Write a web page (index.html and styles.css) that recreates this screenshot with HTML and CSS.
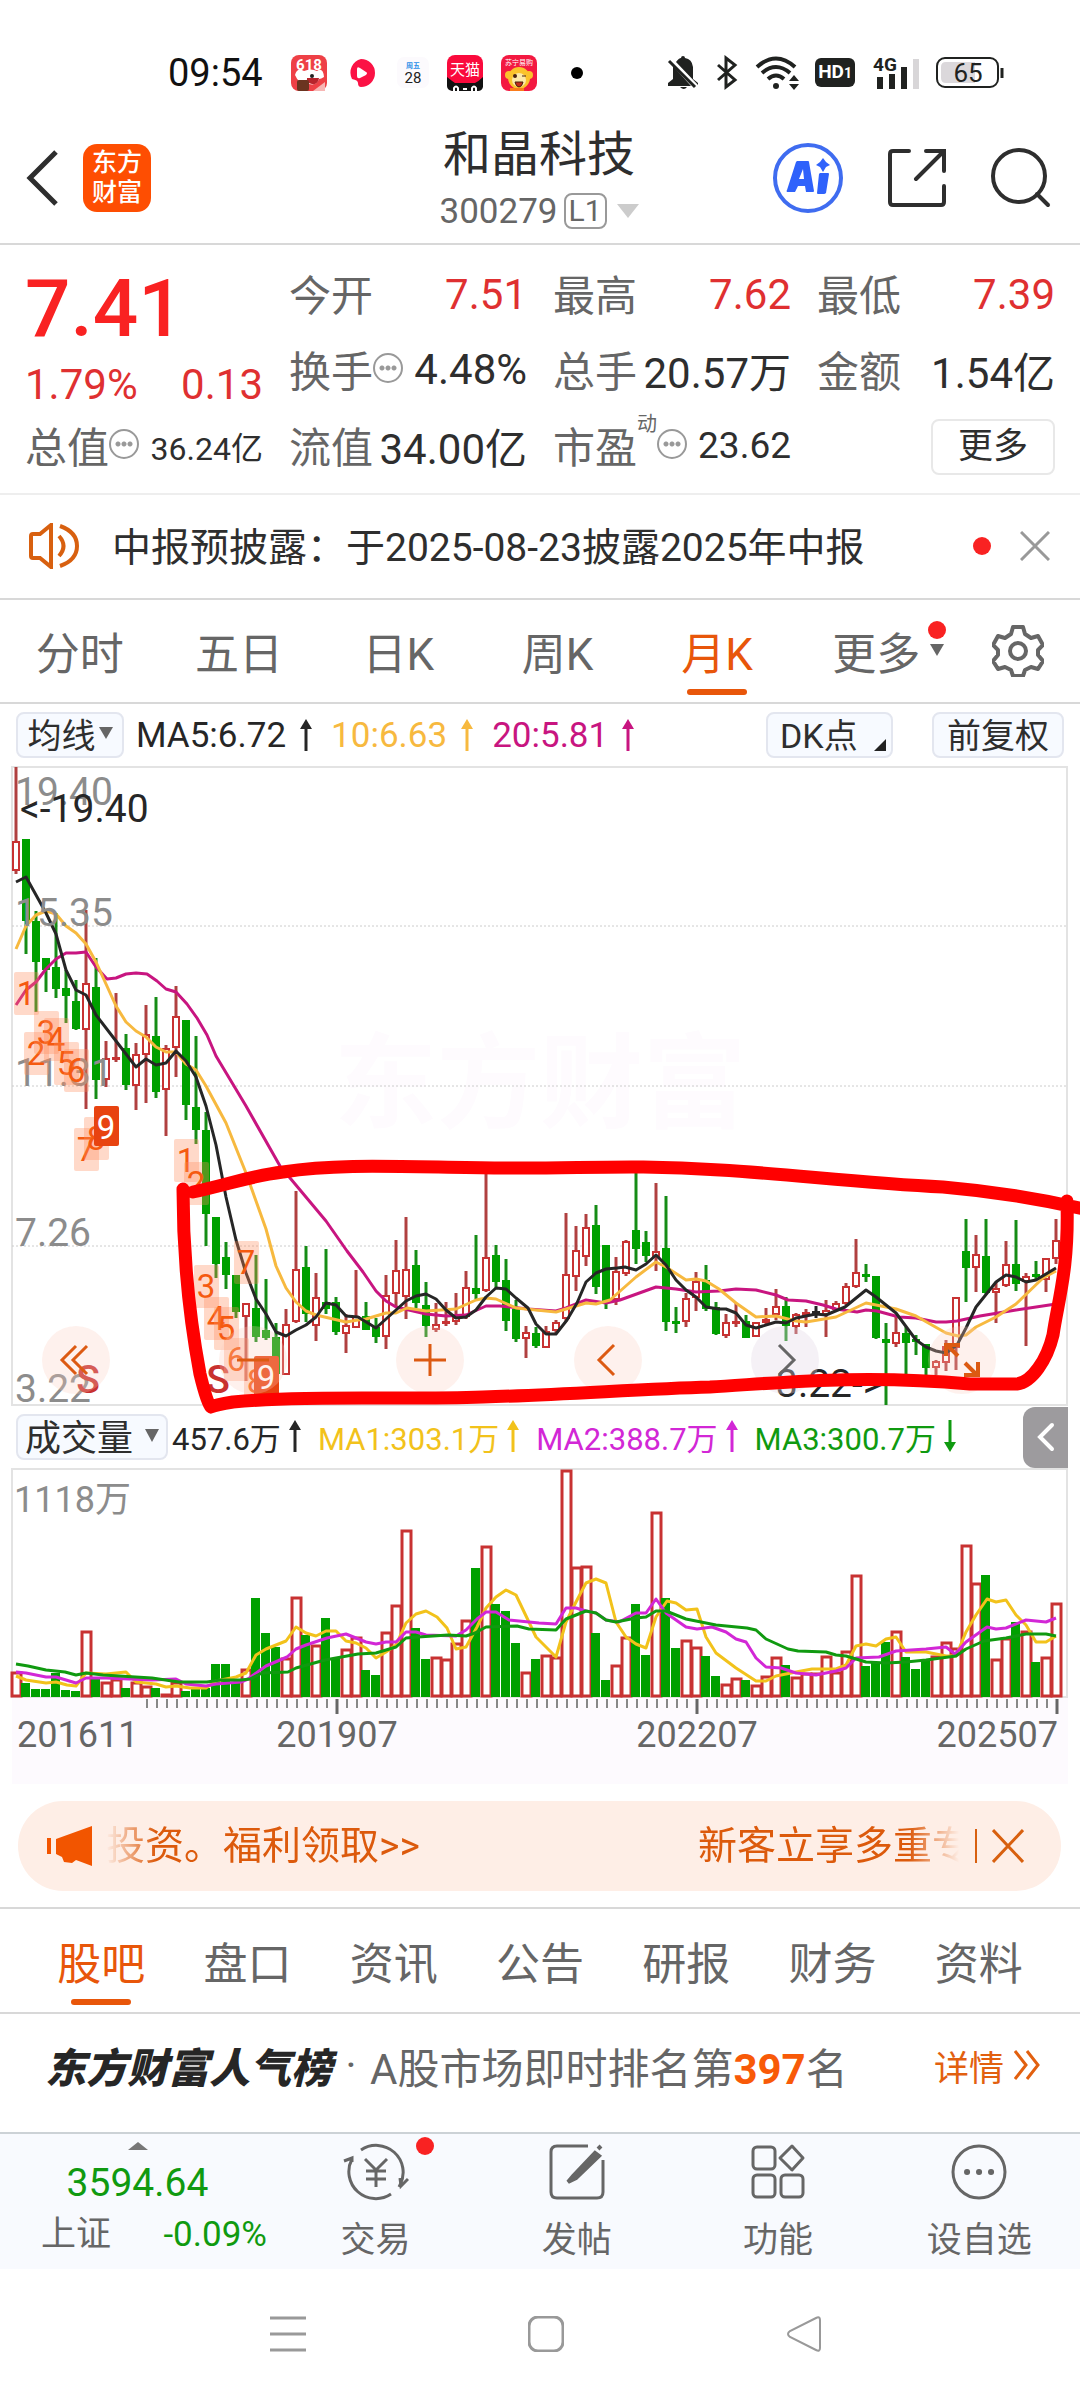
FILE: index.html
```html
<!DOCTYPE html>
<html lang="zh-CN">
<head>
<meta charset="utf-8">
<meta name="viewport" content="width=device-width, initial-scale=1">
<title>和晶科技 300279</title>
<link rel="stylesheet" href="styles.css">
</head>
<body>
<div class="status">
  <span class="clock">09:54</span>
  <div class="apps">
    <svg width="36" height="36" viewBox="0 0 36 36"><rect width="36" height="36" rx="8" fill="#ee4046"/><text x="18" y="15" class="app-618">618</text><path d="M4 20Q6 12 13 16Q20 13 26 16Q32 12 33 22Q30 24 28 24Q26 31 18 29Q8 30 4 20Z" fill="#fff"/><path d="M16 23h12q-1 7-7 6t-5-6Z" fill="#b8242c"/><circle cx="21" cy="21" r="2" fill="#222"/><rect x="6" y="25" width="12" height="11" rx="2" fill="#6b3420"/><path d="M22 36l12-9v9Z" fill="#f7b6b4"/></svg>
    <svg class="app-video" width="28" height="28" viewBox="0 0 28 28"><path d="M14 0a14 14 0 1 1 0 28q-3 0-3-4q0-3-6-4A14 14 0 0 1 14 0Z" fill="#fb1245"/><path d="M10 10q0-3 3-1l6 4q2 1 0 3l-6 3q-3 1-3-2Z" fill="#fff"/></svg>
    <svg width="32" height="36" viewBox="0 0 32 36"><rect y="2" width="32" height="31" rx="7" fill="#fcfafd"/><text x="16" y="13" class="app-week">周五</text><text x="16" y="28" class="app-day">28</text></svg>
    <svg width="36" height="36" viewBox="0 0 36 36"><rect width="36" height="36" rx="8" fill="#fa0a3c"/><path d="M0 22q5 4 8 6h20q4-2 8-6v10q-1 4-5 4H5q-5-1-5-5Z" fill="#111"/><path d="M7 36v-3q2-3 4 0v3M25 36v-3q2-3 4 0v3M16 34h4" stroke="#fff" stroke-width="2" fill="none"/><text x="18" y="20" class="app-tmall">天猫</text></svg>
    <svg width="36" height="36" viewBox="0 0 36 36"><rect width="36" height="36" rx="8" fill="#f31941"/><text x="18" y="10" class="app-shop">苏宁易购</text><circle cx="18" cy="23" r="11" fill="#fbc32c"/><circle cx="8" cy="20" r="4" fill="#fbc32c"/><circle cx="28" cy="20" r="4" fill="#fbc32c"/><circle cx="18" cy="25" r="7" fill="#fde9a8"/><circle cx="14" cy="21" r="2" fill="#47210f"/><path d="M21 21h4M14 27h8q-1 5-4 5t-4-5Z" stroke="#47210f" fill="#c4291c"/><path d="M9 36v-3h14v3Z" fill="#fa7c1c"/></svg>
    <span class="more-dot"></span>
  </div>
  <div class="system">
    <svg width="32" height="36" viewBox="0 0 32 36" fill="#202220"><path d="M9 7Q12 3 14 3q0-2 2-2t2 2q7 1 8 9v12l5 4v2L9 7ZM6 11v13l-5 4v3h23L6 11Z"/><path d="M13 32h7q-3 4-7 0Z"/><path d="M2 6l26 26" stroke="#202220" stroke-width="3"/></svg>
    <svg class="bt" width="22" height="36" viewBox="0 0 22 36" fill="none" stroke="#202220" stroke-width="3"><path d="M2 10l17 15-9 7V3l9 7L2 25"/></svg>
    <svg class="wifi" width="46" height="36" viewBox="0 0 46 36" fill="none" stroke="#202220" stroke-width="4"><path d="M2 12q19-17 38 0M7 18q14-12 28 0M13 24q8-7 16 0"/><circle cx="21" cy="31" r="3" fill="#202220" stroke="none"/><path d="M34 26l5-6 5 6ZM34 29l5 6 5-6Z" fill="#202220" stroke="none"/></svg>
    <span class="hd">HD<small>1</small></span>
    <svg class="signal" width="48" height="36" viewBox="0 0 48 36"><text x="0" y="16" class="net">4G</text><path d="M7 22v12M19 19v15M31 12v22" stroke="#202220" stroke-width="6"/><path d="M43 4v30" stroke="#d8d6d8" stroke-width="6"/></svg>
    <svg width="68" height="32" viewBox="0 0 68 32"><rect x="1" y="1" width="61" height="29" rx="8" fill="none" stroke="#202220" stroke-width="2"/><path d="M10 5h29v21H10q-5 0-5-5V10q0-5 5-5Z" fill="#dbd8db"/><path d="M66 11v10" stroke="#202220" stroke-width="3"/><text x="32" y="25" class="charge">65</text></svg>
  </div>
</div>

<header class="top">
  <div class="top-left">
    <button class="bare" aria-label="返回"><svg width="34" height="58" viewBox="0 0 34 58"><path d="M30 3L4 29l26 26" fill="none" stroke="#2e2e2e" stroke-width="5"/></svg></button>
    <a class="logo" href="#home"><span>东方</span><span>财富</span></a>
  </div>
  <div class="stock">
    <h1>和晶科技</h1>
    <button class="code">300279<span class="level">L1</span><svg width="22" height="14" viewBox="0 0 22 14"><path d="M0 0h22L11 14Z" fill="#ccc"/></svg></button>
  </div>
  <div class="top-right">
    <button class="bare" aria-label="Ai"><svg width="72" height="72" viewBox="0 0 72 72"><circle cx="36" cy="36" r="33" fill="none" stroke="#3f6cf0" stroke-width="4"/><path fill="#2f62fb" fill-rule="evenodd" d="M25 19h11q1 0 1 1l5 29q0 1-1 1h-7l-1-6h-7l-3 6h-8q-1-1 0-2l9-28ZM31 27l-4 10h5ZM48 31h8q1 0 1 1l-3 19q-1 1-2 1h-6q-1 0-1-1l2-19ZM51 16l3 4 4 3-4 2-3 5-3-5-4-2 4-3Z"/></svg></button>
    <button class="bare" aria-label="分享"><svg width="58" height="58" viewBox="0 0 58 58" fill="none" stroke="#2e2e2e" stroke-width="4" stroke-linecap="round"><path d="M21 2H5q-3 0-3 3v48q0 3 3 3h48q3 0 3-3V37M38 2h18v20M56 2L28 30"/></svg></button>
    <button class="bare" aria-label="搜索"><svg width="62" height="62" viewBox="0 0 62 62" fill="none" stroke="#2e2e2e" stroke-width="4" stroke-linecap="round"><circle cx="29" cy="29" r="26"/><path d="M47 47l11 11"/></svg></button>
  </div>
</header>

<section class="quote">
  <div class="price-block">
    <strong class="price">7.41</strong>
    <div class="change"><span>1.79%</span><span>0.13</span></div>
  </div>
  <div class="cell"><span>今开</span><b class="up">7.51</b></div>
  <div class="cell"><span>最高</span><b class="up">7.62</b></div>
  <div class="cell"><span>最低</span><b class="up">7.39</b></div>
  <div class="cell"><span>换手<i class="tip"></i></span><b>4.48%</b></div>
  <div class="cell"><span>总手</span><b>20.57万</b></div>
  <div class="cell"><span>金额</span><b>1.54亿</b></div>
  <div class="cell"><span>总值<i class="tip"></i></span><b class="small">36.24亿</b></div>
  <div class="cell"><span>流值</span><b>34.00亿</b></div>
  <div class="cell"><span>市盈<sup>动</sup><i class="tip"></i></span><b class="mid">23.62</b></div>
  <div class="cell end"><button class="more">更多</button></div>
</section>

<section class="notice">
  <svg width="50" height="46" viewBox="0 0 50 46" fill="none" stroke="#d8600f" stroke-width="4"><path d="M2 13q0-2 2-2h7L22 2v42L11 35H4q-2 0-2-2ZM30 13q9 10 0 20M31 3q17 6 17 20T31 43"/></svg>
  <a href="#notice">中报预披露：于2025-08-23披露2025年中报</a>
  <span class="dot"></span>
  <button class="bare" aria-label="关闭"><svg width="30" height="30" viewBox="0 0 30 30"><path d="M1 1l28 28M29 1L1 29" stroke="#999" stroke-width="3"/></svg></button>
</section>

<nav class="periods">
  <button>分时</button><button>五日</button><button>日K</button><button>周K</button><button class="on">月K</button>
  <button><span class="with-badge">更多<i class="dot badge"></i><i class="caret"></i></span></button>
  <button class="gear" aria-label="设置"><svg width="52" height="52" viewBox="0 0 52 52" fill="none" stroke="#666" stroke-width="4" stroke-linejoin="round"><path d="M21 2h10l2 7 6 4 7-2 5 9-5 5v5l5 6-5 8-7-2-6 3-2 6H21l-2-6-6-3-7 2-5-8 5-6v-5l-5-5 5-9 7 2 6-4Z"/><circle cx="26" cy="26" r="8"/></svg></button>
</nav>

<div class="indicators">
  <button class="chip">均线<i class="caret"></i></button>
  <span class="ma dark">MA5:6.72<svg class="arr" viewBox="0 0 14 32"><path d="M7 32V6"/><path class="tip-fill" d="M1 10L7 0l6 10Z"/></svg></span>
  <span class="ma gold">10:6.63<svg class="arr" viewBox="0 0 14 32"><path d="M7 32V6"/><path class="tip-fill" d="M1 10L7 0l6 10Z"/></svg></span>
  <span class="ma pink">20:5.81<svg class="arr" viewBox="0 0 14 32"><path d="M7 32V6"/><path class="tip-fill" d="M1 10L7 0l6 10Z"/></svg></span>
  <button class="chip dk">DK点<i class="corner"></i></button>
  <button class="chip adj">前复权</button>
</div>

<section class="price-chart">
  <svg class="plot" viewBox="0 766 1080 640">
    <text x="334" y="1120" class="watermark">东方财富</text>
    <path class="frame" d="M12 767H1067V1405H12Z"/>
    <path class="grid" d="M12 926H1067M12 1086H1067M12 1246H1067"/>
    <g id="candles"></g>
    <polyline class="line pink" points="16,1005 26,990 36,982 46,969 56,959 66,953 76,953 86,952 96,967 107,979 116,978 126,974 136,973 147,974 157,981 166,989 176,992 187,1004 197,1018 207,1035 216,1056 246,1106 280,1166 326,1221 347,1251 363,1272 376,1291 386,1301 396,1307 426,1314 446,1316 466,1315 486,1306 500,1306 528,1309 556,1311 566,1308 586,1300 606,1303 620,1300 656,1287 676,1289 696,1292 719,1291 736,1289 756,1290 776,1295 788,1300 806,1301 823,1305 836,1309 857,1312 866,1310 877,1311 899,1317 916,1318 936,1322 946,1322 957,1321 980,1316 1016,1310 1056,1304"/>
    <polyline class="line gold" points="16,949 26,926 36,915 46,911 56,914 66,926 76,933 86,944 96,962 106,984 116,1006 126,1022 136,1031 146,1037 156,1047 166,1052 176,1052 186,1064 196,1070 206,1086 226,1123 246,1173 256,1201 266,1229 276,1266 286,1288 296,1302 306,1311 316,1315 346,1322 358,1320 366,1319 386,1313 396,1313 407,1308 426,1311 456,1309 476,1300 486,1298 496,1299 516,1308 556,1312 566,1309 586,1303 596,1304 610,1300 636,1277 656,1262 666,1267 686,1280 696,1279 706,1281 719,1289 736,1303 756,1317 776,1316 796,1321 806,1322 836,1317 866,1303 896,1309 916,1316 946,1333 958,1336 966,1335 976,1327 996,1317 1016,1304 1043,1278 1056,1271"/>
    <polyline class="line dark" points="16,882 26,877 36,895 46,913 56,934 66,970 76,990 86,995 96,1015 116,1041 126,1054 136,1067 146,1059 156,1065 166,1063 176,1051 186,1061 196,1077 206,1106 216,1145 226,1197 236,1240 246,1273 256,1299 266,1314 276,1332 286,1336 296,1330 306,1325 316,1317 326,1303 336,1305 346,1316 358,1317 376,1328 396,1310 406,1301 416,1296 426,1294 436,1299 446,1310 456,1318 466,1317 476,1310 486,1297 496,1288 506,1289 516,1298 528,1308 536,1324 546,1334 556,1334 567,1320 577,1303 586,1282 596,1273 606,1269 617,1268 625,1267 636,1270 646,1264 656,1255 666,1265 676,1280 686,1290 696,1297 706,1307 719,1309 726,1309 736,1313 746,1325 756,1328 776,1322 786,1323 796,1318 816,1314 826,1315 845,1307 866,1290 876,1297 896,1313 916,1340 926,1347 936,1351 946,1353 957,1345 966,1328 976,1307 996,1282 1006,1275 1016,1277 1026,1282 1036,1280 1056,1268"/>
    <g class="axis">
      <text x="15" y="805">19.40</text><text x="15" y="926">15.35</text><text x="15" y="1086">11.31</text><text x="15" y="1246">7.26</text><text x="15" y="1402">3.22</text>
    </g>
    <text x="20" y="822" class="extreme">&lt;-19.40</text>
    <text x="776" y="1397" class="extreme">3.22-&gt;</text>
    <g class="sell"><text x="88" y="1393">S</text><text x="218" y="1393">S</text></g>
    <g id="marks"></g>
  </svg>
  <div class="tools">
    <button aria-label="最左"><svg viewBox="0 0 36 36"><path d="M18 4L4 18l14 14M29 4L15 18l14 14"/></svg></button>
    <button aria-label="缩小"><svg viewBox="0 0 36 36"><path d="M2 18h32"/></svg></button>
    <button aria-label="放大"><svg viewBox="0 0 36 36"><path d="M2 18h32M18 2v32"/></svg></button>
    <button aria-label="前移"><svg viewBox="0 0 36 36"><path d="M24 3L9 18l15 15"/></svg></button>
    <button class="off" aria-label="后移"><svg viewBox="0 0 36 36"><path d="M12 3l15 15-15 15"/></svg></button>
    <button aria-label="全屏"><svg viewBox="0 0 36 36"><path class="bold" d="M2 14V3h14M3 3l11 11M34 20v13H20M21 21l12 12"/></svg></button>
  </div>
  <svg class="ink" viewBox="0 766 1080 640"><path d="M193 1192C230 1184 250 1176 283 1172C340 1163 400 1167 500 1168C580 1169 630 1164 720 1170C790 1174 860 1183 943 1187C990 1191 1040 1199 1084 1209M183 1189C183 1250 188 1310 200 1374Q207 1403 211 1407Q215 1405 233 1402C310 1395 400 1400 483 1397C560 1395 640 1389 710 1387C780 1383 860 1374 970 1384H1017C1032 1382 1047 1360 1053 1335C1058 1300 1069 1270 1067 1201"/></svg>
</section>

<div class="indicators vol-bar">
  <button class="chip volume">成交量<i class="caret"></i></button>
  <span class="ma dark">457.6万<svg class="arr" viewBox="0 0 14 32"><path d="M7 32V6"/><path class="tip-fill" d="M1 10L7 0l6 10Z"/></svg></span>
  <span class="ma gold2">MA1:303.1万<svg class="arr" viewBox="0 0 14 32"><path d="M7 32V6"/><path class="tip-fill" d="M1 10L7 0l6 10Z"/></svg></span>
  <span class="ma violet">MA2:388.7万<svg class="arr" viewBox="0 0 14 32"><path d="M7 32V6"/><path class="tip-fill" d="M1 10L7 0l6 10Z"/></svg></span>
  <span class="ma green">MA3:300.7万<svg class="arr" viewBox="0 0 14 32"><path d="M7 0V26"/><path class="tip-fill" d="M1 22l6 10 6-10Z"/></svg></span>
  <button class="fold" aria-label="展开"><svg width="20" height="32" viewBox="0 0 20 32"><path d="M16 4L4 16l12 12" fill="none" stroke="#fff" stroke-width="4" stroke-linecap="round"/></svg></button>
</div>

<section class="volume-chart">
  <svg class="plot" viewBox="0 1468 1080 316">
    <rect x="12" y="1697" width="1056" height="87" fill="#fdfafe"/>
    <path class="frame" d="M12 1469H1067V1697H12Z"/>
    <g id="bars"></g>
    <polyline class="line gold2" points="16,1676 26,1680 46,1683 56,1682 67,1685 76,1686 86,1673 106,1674 126,1672 136,1682 156,1684 166,1687 176,1686 190,1688 206,1688 216,1681 236,1677 246,1673 256,1655 266,1649 286,1641 296,1627 306,1633 316,1636 326,1631 336,1631 346,1641 356,1643 366,1648 376,1658 386,1652 396,1645 406,1623 416,1614 426,1611 437,1617 447,1628 456,1649 466,1647 477,1627 486,1608 496,1597 506,1590 516,1595 527,1618 536,1637 556,1657 566,1622 576,1602 586,1583 596,1579 606,1583 616,1622 626,1637 636,1644 646,1648 656,1617 667,1601 676,1603 686,1610 697,1609 706,1637 716,1653 736,1668 756,1681 766,1681 776,1676 796,1672 812,1669 836,1669 846,1665 856,1646 866,1644 876,1646 886,1639 896,1637 906,1652 926,1652 946,1656 956,1656 966,1632 976,1615 987,1599 996,1602 1006,1600 1016,1615 1026,1625 1036,1642 1046,1642 1056,1636"/>
    <polyline class="line violet" points="16,1672 26,1673 46,1677 56,1677 76,1683 86,1678 106,1678 152,1680 176,1679 186,1684 206,1686 216,1684 241,1682 248,1679 266,1666 287,1657 296,1649 306,1645 327,1638 346,1634 366,1642 376,1644 386,1642 396,1642 406,1632 416,1632 426,1635 456,1636 466,1630 477,1619 486,1612 496,1612 509,1620 539,1623 556,1624 566,1608 576,1608 586,1611 596,1613 606,1620 619,1622 636,1613 646,1613 656,1599 666,1613 686,1627 697,1629 712,1627 726,1632 736,1639 746,1642 756,1658 766,1667 781,1668 796,1673 816,1675 836,1671 846,1668 856,1658 879,1657 896,1651 926,1649 946,1647 955,1654 966,1642 987,1627 996,1629 1006,1628 1026,1620 1046,1622 1056,1618"/>
    <polyline class="line green" points="16,1664 28,1666 46,1670 65,1672 76,1675 86,1673 103,1675 152,1678 179,1682 207,1682 220,1680 241,1680 250,1679 262,1673 288,1672 296,1668 325,1660 358,1654 376,1653 396,1647 406,1638 418,1637 448,1635 466,1636 475,1633 486,1627 517,1626 529,1629 556,1630 566,1619 586,1611 596,1613 606,1620 616,1622 636,1618 646,1617 656,1611 666,1611 686,1619 716,1625 747,1628 756,1630 766,1639 788,1649 798,1651 826,1652 836,1655 846,1656 866,1662 886,1663 906,1662 926,1660 956,1656 966,1649 984,1641 1006,1638 1026,1634 1046,1634 1056,1636"/>
    <g id="ticks"></g>
    <text x="14" y="1512" class="vol-max">1118万</text>
    <g class="dates"><text x="17" y="1747">201611</text><text x="337" y="1747" class="c">201907</text><text x="697" y="1747" class="c">202207</text><text x="1058" y="1747" class="e">202507</text></g>
  </svg>
</section>

<aside class="promo">
  <svg width="46" height="40" viewBox="0 0 46 40" fill="#f25500"><path d="M0 12h4v16H0ZM9 13L45 0v40L29 34l-4 3-8-1-2-5-6-3Z"/></svg>
  <a class="marquee" href="#promo"><span>投资。福利领取&gt;&gt;</span><span>新客立享多重专</span></a>
  <button class="bare" aria-label="关闭"><svg width="32" height="34" viewBox="0 0 32 34"><path d="M1 1l30 32M31 1L1 33" stroke="#d8600f" stroke-width="3"/></svg></button>
</aside>

<nav class="sections">
  <button class="on">股吧</button><button>盘口</button><button>资讯</button><button>公告</button><button>研报</button><button>财务</button><button>资料</button>
</nav>

<section class="rank">
  <strong class="rank-title">东方财富人气榜</strong><span class="sep">·</span>
  <span>A股市场即时排名第<b>397</b>名</span>
  <a href="#rank">详情<svg width="26" height="30" viewBox="0 0 26 30"><path d="M1 1l11 14L1 29M13 1l11 14-11 14" fill="none" stroke="#e2600f" stroke-width="3"/></svg></a>
</section>

<footer class="bottom">
  <button class="index"><i class="peak"></i><span class="idx-val">3594.64</span><span class="idx-row"><span>上证</span><span class="down">-0.09%</span></span></button>
  <button class="act"><svg width="66" height="60" viewBox="0 0 66 60" fill="none" stroke="#666" stroke-width="3"><path d="M18 8A27 27 0 0 1 57 43l-1 2M1 19l8-3v4M9 17A27 27 0 0 0 48 52M65 37l-7 7-1-8M22 17l11 11 11-11M33 28v17M23 29h20M23 37h20"/></svg>交易<i class="dot trade"></i></button>
  <button class="act"><svg width="56" height="60" viewBox="0 0 56 60" fill="none" stroke="#666" stroke-width="3"><path d="M39 4H8Q2 4 2 10v40q0 6 6 6h40q6 0 6-6V18"/><path d="M46 11L24 34l-5 6 8-4 23-22ZM49 7l3-3" stroke-width="4" fill="#666"/></svg>发帖</button>
  <button class="act"><svg width="56" height="60" viewBox="0 0 56 60" fill="none" stroke="#666" stroke-width="3"><rect x="3" y="5" width="22" height="22" rx="4"/><rect x="3" y="33" width="22" height="22" rx="4"/><rect x="31" y="33" width="22" height="22" rx="4"/><path d="M42 4l11 12-11 12-12-12Z" stroke-linejoin="round"/></svg>功能</button>
  <button class="act"><svg width="60" height="60" viewBox="0 0 60 60" fill="none" stroke="#666" stroke-width="3"><circle cx="30" cy="30" r="26"/><path d="M18 30h.1M30 30h.1M42 30h.1" stroke-width="6" stroke-linecap="round"/></svg>设自选</button>
</footer>

<nav class="sysnav">
  <button class="bare" aria-label="任务"><svg width="36" height="36" viewBox="0 0 36 36"><path d="M0 2h36M0 18h36M0 34h36" stroke="#999" stroke-width="3"/></svg></button>
  <button class="bare" aria-label="主页"><svg width="36" height="36" viewBox="0 0 36 36"><rect x="1" y="1" width="34" height="34" rx="9" fill="none" stroke="#999" stroke-width="3"/></svg></button>
  <button class="bare" aria-label="后退"><svg width="36" height="36" viewBox="0 0 36 36"><path d="M30 2q4-2 4 2v28q0 4-4 2L4 21q-4-3 0-6Z" fill="none" stroke="#999" stroke-width="2"/></svg></button>
</nav>
<script src="chart.js"></script>
</body>
</html>
```
FILE: styles.css
```css
* { box-sizing: border-box; }
body { margin: 0; background: #fff; color: #2e2e2e; font-family: Roboto, "Noto Sans CJK SC", sans-serif; font-size: 42px; }
button { margin: 0; padding: 0; border: 0; background: none; color: inherit; font: inherit; }
a { color: inherit; text-decoration: none; }
i { font-style: normal; }
svg { display: block; flex: none; }
.bare { display: flex; }
.dot { width: 18px; height: 18px; border-radius: 50%; background: #f92222; }
.caret { display: inline-block; border: 8px solid transparent; border-top: 12px solid #666; border-bottom: 0; }

.status { display: flex; align-items: center; height: 104px; padding: 41px 76px 0 168px; }
.clock { font-size: 38px; color: #111; }
.apps { display: flex; align-items: center; gap: 18px; margin-left: 28px; }
.app-video { margin: 0 4px 0 2px; }
.more-dot { width: 12px; height: 12px; margin-left: 16px; border-radius: 50%; background: #000; }
.apps text { text-anchor: middle; fill: #fff; }
.app-618 { font-size: 15px; font-weight: 700; }
.apps .app-week { font-size: 7px; font-weight: 700; fill: #2b8fe8; }
.apps .app-day { font-size: 15px; fill: #222; }
.app-tmall { font-size: 15px; }
.app-shop { font-size: 7px; }
.system { display: flex; align-items: center; margin-left: auto; }
.bt { margin-left: 17px; }
.wifi { margin-left: 17px; }
.hd { margin-left: 14px; padding: 0 3px; border-radius: 6px; background: #202220; color: #fff; font-size: 19px; font-weight: 700; line-height: 28px; }
.hd small { font-size: 14px; }
.signal { margin: 0 15px 0 18px; }
.net { font-size: 19px; font-weight: 700; fill: #202220; }
.charge { font-size: 26px; text-anchor: middle; fill: #202220; }

.top { display: grid; grid-template-columns: 1fr auto 1fr; align-items: center; height: 141px; padding: 8px 28px 0 26px; border-bottom: 2px solid #d8d8d8; }
.top-left, .top-right { display: flex; align-items: center; }
.top-left { gap: 23px; }
.top-right { justify-content: flex-end; gap: 44px; }
.logo { display: flex; flex-direction: column; justify-content: center; width: 68px; height: 68px; border-radius: 14px; background: #fe4e02; color: #fff; font-size: 25px; font-weight: 500; line-height: 30px; text-align: center; }
.stock { padding-top: 7px; text-align: center; }
.stock h1 { margin: 0; font-size: 48px; font-weight: 400; line-height: 60px; }
.code { display: flex; align-items: center; height: 52px; color: #666; font-size: 35px; }
.level { margin: 0 10px 0 6px; padding: 0 3px; border: 2px solid #999; border-radius: 8px; font-size: 30px; line-height: 32px; }

.quote { display: grid; grid-template-columns: repeat(4, minmax(0, 1fr)); grid-auto-rows: 76px; column-gap: 26px; padding: 13px 25px 7px; border-bottom: 2px solid #eee; }
.price-block { grid-row: span 2; color: #f92222; }
.price { display: block; font-size: 80px; font-weight: 500; line-height: 102px; }
.change { display: flex; justify-content: space-between; color: #df3031; line-height: 50px; }
.cell { display: flex; align-items: center; justify-content: space-between; padding-bottom: 3px; white-space: nowrap; }
.cell > span { display: flex; align-items: center; padding-bottom: 5px; color: #666; }
.cell b { padding-bottom: 2px; font-weight: 400; }
.cell .up { padding-bottom: 0; color: #df3031; }
.cell .small { font-size: 32px; }
.cell .mid { font-size: 37px; }
.cell sup { align-self: flex-start; font-size: 20px; line-height: 20px; }
.tip { width: 30px; height: 30px; border: 2px solid #999; border-radius: 50%; background: radial-gradient(circle at 7px 50%, #999 2px, transparent 3px), radial-gradient(circle at 13px 50%, #999 2px, transparent 3px), radial-gradient(circle at 19px 50%, #999 2px, transparent 3px); }
.cell.end { justify-content: flex-end; }
.more { width: 124px; height: 56px; border: 2px solid #e8e8e8; border-radius: 8px; font-size: 35px; line-height: 48px; }

.notice { display: flex; align-items: center; height: 105px; padding: 0 30px 2px 29px; border-bottom: 2px solid #d8d8d8; font-size: 39px; }
.notice a { margin: 0 auto 0 33px; padding-bottom: 4px; white-space: nowrap; }
.notice .bare { margin-left: 29px; }

.periods, .sections { display: flex; height: 104px; border-bottom: 2px solid #d8d8d8; color: #666; font-size: 44px; }
.periods button, .sections button { position: relative; flex: 1; }
.periods .gear { display: flex; flex: 0 0 124px; align-items: center; justify-content: center; }
.on { color: #e8560a; }
.on::after { content: ""; position: absolute; left: 50%; bottom: 7px; width: 60px; height: 6px; margin-left: -30px; border-radius: 3px; background: #e8560a; }
.with-badge { position: relative; display: inline-block; }
.badge { position: absolute; top: 2px; right: -26px; }
.with-badge .caret { position: absolute; top: 25px; right: -24px; border-width: 12px 7px 0; }

.indicators { display: flex; align-items: center; height: 62px; padding: 0 16px; font-size: 35px; white-space: nowrap; }
.chip { display: flex; align-items: center; justify-content: center; gap: 3px; width: 108px; height: 46px; padding-bottom: 4px; border: 2px solid #e3e6ef; border-radius: 8px; background: #f7faff; font-size: 34px; }
.chip .caret { border-width: 12px 7px 0; }
.ma { display: flex; align-items: center; gap: 13px; margin-right: 18px; }
.chip + .ma { margin-left: 12px; }
.arr { width: 14px; height: 32px; fill: none; stroke: currentColor; stroke-width: 3; }
.tip-fill { fill: currentColor; stroke: none; }
.dk { position: relative; justify-content: flex-start; width: 127px; margin-left: auto; padding-left: 12px; }
.corner { position: absolute; right: 5px; bottom: 5px; border: 6px solid #222; border-top-color: transparent; border-left-color: transparent; }
.adj { width: 132px; margin-left: 39px; }
.dark { color: #262626; }
.gold { color: #f7b93f; }
.gold2 { color: #f2c21b; }
.pink { color: #c81580; }
.violet { color: #d227d6; }
.green { color: #109a10; }
.vol-bar { padding-right: 12px; font-size: 31px; }
.vol-bar .volume { gap: 12px; width: 152px; font-size: 36px; }
.vol-bar .caret { border-width: 13px 7px 0; }
.vol-bar .chip + .ma { margin-left: 4px; }
.vol-bar .ma { gap: 7px; margin-right: 16px; padding-bottom: 2px; }
.fold { display: flex; align-items: center; justify-content: center; width: 45px; height: 61px; margin-left: auto; border-radius: 12px 0 0 12px; background: #9d9b9e; }

.price-chart { position: relative; }
.plot { width: 100%; height: auto; }
.plot text { font-size: 39px; }
.plot .watermark { font-size: 103px; font-weight: 700; fill: #fefbfe; }
.frame { fill: none; stroke: #e3e3e3; stroke-width: 2; }
.grid { stroke: #ccc; stroke-width: 1; stroke-dasharray: 2 2; }
.line { fill: none; stroke: currentColor; stroke-width: 3; stroke-linejoin: round; }
.rise { fill: #fff; stroke: #c83232; stroke-width: 2; }
.fall { fill: #00a000; stroke: #00a000; stroke-width: 2; }
.flat { fill: #262626; stroke: #262626; stroke-width: 2; }
.wick-rise { stroke: #b04040; stroke-width: 3; }
.wick-fall { stroke: #168c16; stroke-width: 3; }
.wick-flat { stroke: #262626; stroke-width: 3; }
.axis { fill: #8c8c8c; }
.extreme { fill: #262626; }
.sell { fill: #c8312f; font-weight: 500; text-anchor: middle; }
.mark rect { fill: #ff8c5a; fill-opacity: .33; }
.plot .mark text { font-size: 33px; fill: #f55a10; text-anchor: middle; }
.mark.nine rect { fill: #e84310; fill-opacity: 1; }
.plot .mark.nine text { fill: #fff; }
.tools { position: absolute; left: 0; right: 0; bottom: 12px; display: flex; justify-content: space-between; padding: 0 84px 0 42px; }
.tools button { display: flex; align-items: center; justify-content: center; width: 68px; height: 68px; border-radius: 50%; background: rgba(250, 205, 190, .28); }
.tools svg { width: 36px; height: 36px; fill: none; stroke: #dc5a12; stroke-width: 3; }
.tools .bold { stroke-width: 4; }
.tools .off { background: rgba(225, 215, 230, .35); }
.tools .off svg { stroke: #666; }
.ink { position: absolute; top: 0; left: 0; width: 100%; height: 100%; overflow: visible; fill: none; stroke: #f00; stroke-width: 13; stroke-linecap: round; stroke-linejoin: round; pointer-events: none; }
.volume-chart .rise { stroke-width: 3; }
.tick { stroke: #888; stroke-width: 2; }
.tick.major { stroke: #666; stroke-width: 3; }
.plot .vol-max { font-size: 36px; fill: #8c8c8c; }
.plot .dates text { font-size: 36px; fill: #666; }
.dates .c { text-anchor: middle; }
.dates .e { text-anchor: end; }

.promo { display: flex; align-items: center; height: 90px; margin: 17px 19px 16px 18px; padding: 0 37px 0 29px; border-radius: 45px; background: #feeee6; color: #dc5a0c; font-size: 39px; }
.marquee { display: flex; flex: 1; justify-content: space-between; height: 58px; margin: 0 13px; overflow: hidden; line-height: 58px; white-space: nowrap; -webkit-mask-image: linear-gradient(90deg, transparent, #000 50px, #000 calc(100% - 50px), transparent); mask-image: linear-gradient(90deg, transparent, #000 50px, #000 calc(100% - 50px), transparent); }
.marquee span:last-child { margin-right: -12px; }
.promo .bare { position: relative; margin-left: 20px; }
.promo .bare::before { content: ""; position: absolute; left: -17px; top: 0; width: 2px; height: 34px; background: #d8600f; }

.sections { height: 107px; padding: 0 28px; border-top: 2px solid #d8d8d8; }
.rank { display: flex; align-items: center; height: 118px; padding: 0 40px 16px 45px; color: #666; white-space: nowrap; }
.rank-title { color: #262626; font-size: 41px; font-weight: 900; font-style: italic; }
.sep { width: 38px; text-align: center; }
.rank b { color: #f85a08; font-weight: 700; }
.rank a { display: flex; align-items: center; gap: 10px; margin-left: auto; color: #e2600f; font-size: 35px; }

.bottom { display: flex; height: 137px; border-top: 2px solid #ccd2d6; background: #f8fafe; color: #666; font-size: 35px; }
.index { display: flex; flex: 0 0 275px; flex-direction: column; align-items: center; padding-top: 8px; }
.peak { border: 10px solid transparent; border-top: 0; border-bottom: 8px solid #777; }
.idx-val { color: #109a10; font-size: 39px; line-height: 67px; }
.idx-row { display: flex; justify-content: space-between; align-self: stretch; padding: 0 8px 0 41px; line-height: 36px; }
.down { color: #109a10; }
.act { position: relative; display: flex; flex: 1; flex-direction: column; align-items: center; padding-top: 8px; line-height: 78px; }
.trade { position: absolute; top: 3px; left: 50%; margin-left: 40px; }

.sysnav { display: flex; justify-content: center; gap: 222px; padding: 47px 0 48px 12px; }
```
FILE: chart.js
```js
// Monthly candles from 2016-11 to 2025-07: kind, high, body top, body bottom, low.
const candles = `r767,842,871,874 g840,840,921,954 g911,922,962,1012 g959,959,970,992 g913,968,989,998 g970,989,996,1023 g980,1002,1029,1030 r910,984,1030,1109 g958,988,1080,1099 r1041,1059,1080,1087
r993,1058,1060,1062 g1034,1049,1085,1090 r1043,1055,1086,1110 r1005,1035,1055,1103 g997,1037,1092,1098 r1045,1049,1090,1136 r986,1017,1048,1077 g1021,1021,1105,1120 g1036,1108,1130,1144 g1112,1131,1214,1246
g1218,1218,1264,1278 g1242,1258,1275,1289 g1276,1276,1312,1318 r1303,1304,1317,1381 g1255,1309,1337,1342 g1279,1331,1338,1340 g1323,1338,1374,1374 r1309,1325,1375,1375 r1191,1270,1322,1323 g1246,1268,1314,1322
r1273,1298,1326,1341 g1249,1303,1309,1314 g1297,1303,1332,1335 r1314,1326,1334,1353 r1270,1317,1328,1328 g1302,1317,1330,1330 g1318,1328,1337,1343 r1275,1296,1337,1349 r1240,1271,1294,1307 r1217,1270,1297,1319
g1250,1266,1303,1308 g1282,1306,1326,1337 r1303,1325,1330,1332 r1302,1322,1324,1326 r1293,1318,1322,1325 r1271,1288,1317,1319 g1235,1289,1294,1299 r1173,1258,1291,1292 g1245,1256,1282,1288 g1259,1281,1321,1331
g1300,1310,1339,1342 r1326,1333,1339,1358 g1327,1334,1346,1348 r1326,1332,1348,1348 r1320,1323,1331,1333 r1213,1275,1319,1321 r1226,1251,1277,1291 r1214,1228,1257,1266 g1205,1226,1287,1294 g1246,1246,1302,1309
r1257,1272,1300,1305 r1240,1242,1274,1276 g1173,1231,1249,1264 g1231,1243,1256,1262 r1183,1252,1257,1271 g1196,1249,1322,1331 g1307,1322,1324,1333 r1293,1299,1322,1327 r1272,1282,1298,1311 g1265,1281,1309,1311
g1302,1308,1334,1335 r1314,1323,1336,1338 r1303,1322,1324,1327 g1315,1322,1338,1338 r1322,1323,1337,1337 r1308,1320,1323,1325 r1289,1307,1315,1320 g1297,1307,1326,1341 r1313,1315,1327,1334 r1309,1313,1316,1327
k1306,1312,1314,1318 r1300,1311,1315,1337 r1301,1304,1310,1311 r1283,1287,1304,1305 r1239,1273,1287,1288 g1264,1275,1277,1282 g1276,1277,1338,1339 g1323,1340,1343,1405 r1315,1333,1344,1347 g1327,1334,1343,1377
g1335,1340,1342,1355 g1345,1345,1368,1375 r1360,1362,1368,1375 r1340,1347,1363,1371 r1298,1298,1348,1370 g1219,1252,1268,1302 r1235,1255,1268,1292 g1219,1257,1293,1294 r1282,1289,1293,1323 r1241,1265,1286,1287
g1220,1265,1284,1291 r1273,1277,1282,1346 g1261,1275,1277,1280 r1258,1259,1280,1292 r1219,1241,1259,1264`.split(/\s+/);

// Volume bar heights for the same months.
const volumes = [24,13,7,7,23,6,5,65,17,14,17,8,14,10,8,2,14,5,7,8,32,32,13,27,98,63,49,38,99,61,51,78,38,47,59,26,21,64,91,166,68,37,39,37,53,76,128,150,92,85,53,24,37,41,39,226,129,130,63,16,31,59,92,41,184,98,48,56,49,40,20,12,18,16,11,20,39,31,19,23,23,40,24,45,121,30,34,54,65,39,27,35,40,54,48,151,113,121,37,58,74,65,34,39,93];

// Volume colour follows the previous close, so it can differ from the candle's.
const volumeKind = { 95: 'r' };

// Sequence marks: digit, centre x, centre y.
const marks = [[1,26,994],[2,36,1054],[3,46,1033],[4,56,1040],[5,66,1064],[6,76,1071],[7,86,1150],[8,96,1139],[9,106,1128],[1,186,1161],[2,196,1184],[3,206,1287],[4,216,1319],[5,226,1329],[6,236,1360],[7,246,1263],[8,256,1382],[9,266,1378]];

const kinds = { r: 'rise', g: 'fall', k: 'flat' };
const xOf = i => 16 + i * 10;
let body = '', bars = '', ticks = '';

candles.forEach((entry, i) => {
  const kind = kinds[entry[0]];
  const [high, top, bottom, low] = entry.slice(1).split(',').map(Number);
  const x = xOf(i);
  body += `<path class="wick-${kind}" d="M${x} ${high}V${low}"/><rect class="${kind}" x="${x - 3}" y="${top}" width="6" height="${Math.max(1, bottom - top - 1)}"/>`;
  const h = volumes[i];
  const cls = (volumeKind[i] || entry[0]) === 'g' ? 'fall' : 'rise';
  bars += `<rect class="${cls}" x="${x - 4}" y="${1697 - h}" width="${cls === 'rise' ? 9 : 7}" height="${Math.max(1, h - 1)}"/>`;
  const major = i === 32 || i === 68 || i === 104;
  if (i > 12) ticks += `<path class="tick${major ? ' major' : ''}" d="M${x + 1} 1699V${major ? 1714 : 1708}"/>`;
});

document.getElementById('candles').innerHTML = body;
document.getElementById('bars').innerHTML = bars;
document.getElementById('ticks').innerHTML = ticks;
document.getElementById('marks').innerHTML = marks.map(([n, x, y]) =>
  `<g class="mark${n === 9 ? ' nine' : ''}"><rect x="${x - 12}" y="${y - 22}" width="25" height="${n === 9 ? 40 : 43}" rx="2"/><text x="${x}" y="${y + 11}">${n}</text></g>`).join('');
```
